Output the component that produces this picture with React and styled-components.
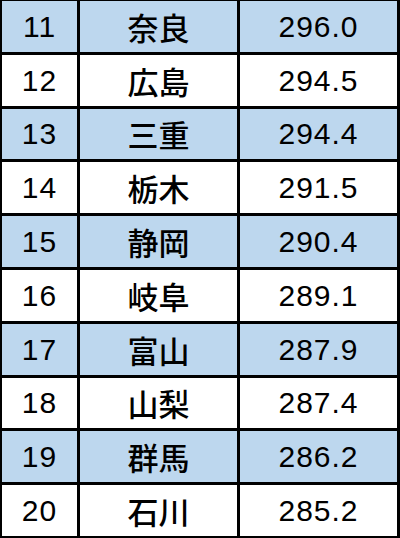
import React from 'react';
import styled, { createGlobalStyle } from 'styled-components';

const GlobalStyle = createGlobalStyle`
    html, body {
        margin: 0;
        padding: 0;
        background: #fff;
    }
`;

const rows = [
    { rank: 11, pref: '奈良', value: '296.0' },
    { rank: 12, pref: '広島', value: '294.5' },
    { rank: 13, pref: '三重', value: '294.4' },
    { rank: 14, pref: '栃木', value: '291.5' },
    { rank: 15, pref: '静岡', value: '290.4' },
    { rank: 16, pref: '岐阜', value: '289.1' },
    { rank: 17, pref: '富山', value: '287.9' },
    { rank: 18, pref: '山梨', value: '287.4' },
    { rank: 19, pref: '群馬', value: '286.2' },
    { rank: 20, pref: '石川', value: '285.2' },
];

const Table = styled.div`
    width: 400px;
    height: 538px;
    box-sizing: border-box;
    display: grid;
    grid-template-columns: 75px 157px 157px;
    grid-template-rows: repeat(10, 1fr);
    gap: 3px;
    padding: 1px 3px 2px 2px;
    background: #000;
`;

const Cell = styled.div`
    display: flex;
    align-items: center;
    justify-content: center;
    background: ${(p) => (p.$shaded ? '#bdd7ee' : '#fff')};
    color: #000;
    font-family: "Liberation Sans", Arial, sans-serif;
    font-size: 30px;
    font-weight: 400;
    letter-spacing: 1px;
    line-height: 1;
    padding-top: 1px;
`;

const PrefCell = styled(Cell)`
    font-family: "Noto Sans CJK JP", sans-serif;
    font-size: 31px;
    font-weight: 500;
    letter-spacing: 0;
    padding-top: 0;
`;

function App() {
    return (
        <>
            <GlobalStyle />
            <Table>
                {rows.map((row, i) => {
                    const shaded = i % 2 === 0;
                    return (
                        <React.Fragment key={row.rank}>
                            <Cell $shaded={shaded}>{row.rank}</Cell>
                            <PrefCell $shaded={shaded}>{row.pref}</PrefCell>
                            <Cell $shaded={shaded}>{row.value}</Cell>
                        </React.Fragment>
                    );
                })}
            </Table>
        </>
    );
}

export default App;
